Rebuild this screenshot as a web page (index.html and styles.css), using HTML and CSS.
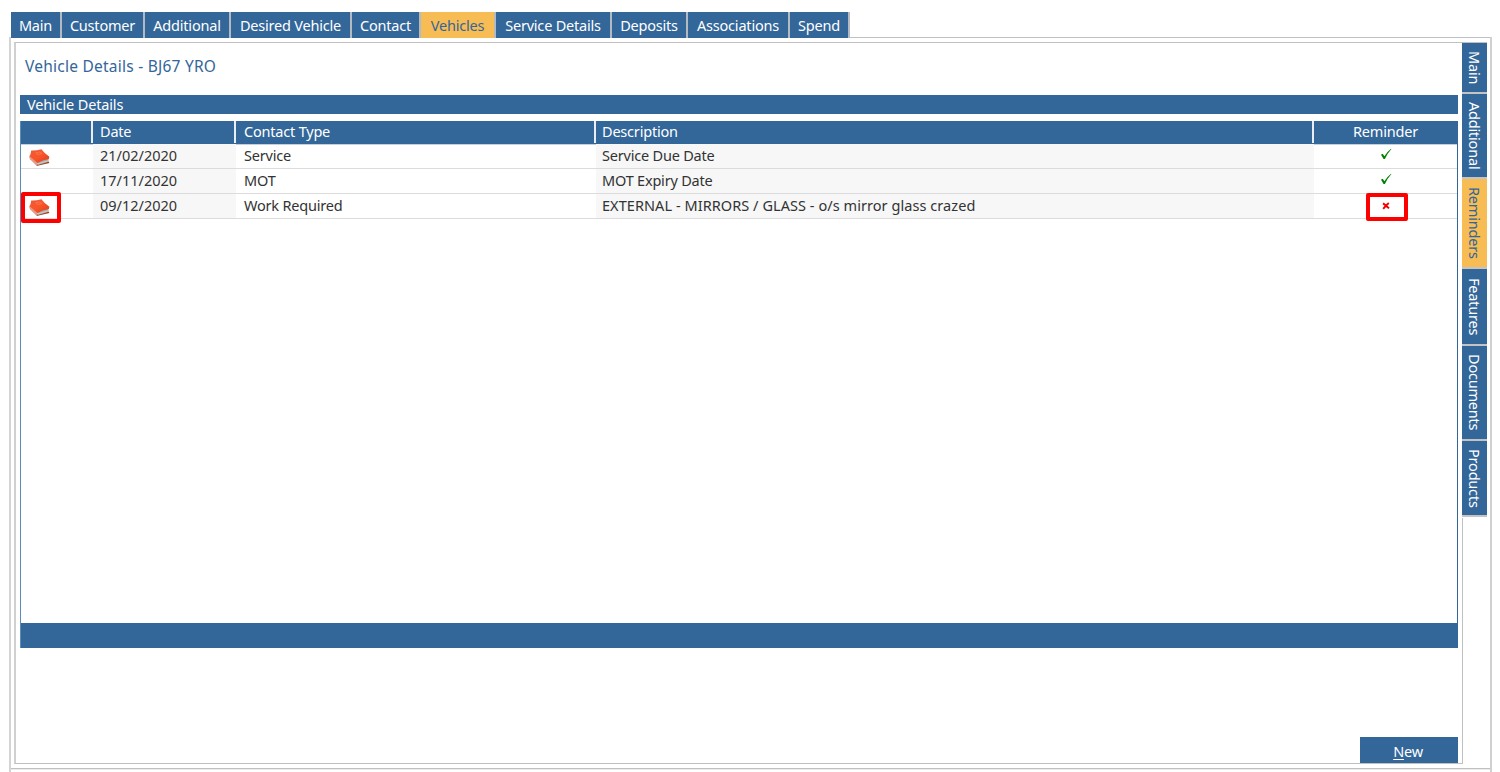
FILE: index.html
```html
<!DOCTYPE html>
<html lang="en">
<head>
<meta charset="UTF-8">
<title>Vehicle Details</title>
<link rel="stylesheet" href="styles.css">
</head>
<body>

<svg class="defs" aria-hidden="true">
  <defs>
    <linearGradient id="cover" x1="0" y1="0" x2="1" y2="1">
      <stop offset="0" stop-color="#ee5a38"/>
      <stop offset="0.5" stop-color="#fb5429"/>
      <stop offset="1" stop-color="#d8401c"/>
    </linearGradient>
  </defs>
  <symbol id="book" viewBox="0 0 22 20">
    <path d="M8.5 18 L21.4 14.9 L20.6 13.6 L9 16Z" fill="#a33a26"/>
    <path d="M9.2 13 L20.4 10 L20.6 13.8 L9.4 17.2Z" fill="#a9aba8"/>
    <path d="M9.6 15.8 L20.4 12.8" stroke="#d9dad8" stroke-width="0.7"/>
    <path d="M1.2 8 Q1.2 10 2 11.3 L8.8 17.9 L9.4 13.4Z" fill="#e39a88"/>
    <path d="M3.2 2.4 Q8.5 2.6 13.4 1.2 Q16.5 5.4 21.4 8.8 L20.8 11 Q14.5 12 9.6 14.9 L1.4 8.3 Q3 6 3.2 2.4Z" fill="url(#cover)"/>
    <path d="M7.8 4.8 L12 3.9 L13.8 5.5 L9.4 6.6Z" fill="none" stroke="#ff8560" stroke-width="0.6"/>
  </symbol>
  <symbol id="tick" viewBox="0 0 12 12">
    <path d="M1 6.8 L2.7 5.8 L4.4 8.2 Q7 4 11 0.8 L11.4 1.1 Q7.4 5.5 4.9 11 L3.6 11Z" fill="#008000"/>
  </symbol>
  <symbol id="cross" viewBox="0 0 8 8">
    <path d="M1 1.4 Q4 3.4 7 6.4 M6.8 1 Q3.8 3.4 1.2 6.8" fill="none" stroke="#f00000" stroke-width="1.9"/>
  </symbol>
</svg>

<nav class="tabs">
  <a>Main</a>
  <a>Customer</a>
  <a>Additional</a>
  <a>Desired Vehicle</a>
  <a>Contact</a>
  <a class="active">Vehicles</a>
  <a>Service Details</a>
  <a>Deposits</a>
  <a>Associations</a>
  <a>Spend</a>
</nav>

<div class="frame">
  <div class="panel">
    <h1>Vehicle Details - BJ67 YRO</h1>
    <h2>Vehicle Details</h2>

    <div class="grid">
      <div class="row head">
        <div></div>
        <div>Date</div>
        <div>Contact Type</div>
        <div>Description</div>
        <div>Reminder</div>
      </div>
      <div class="row">
        <div><svg class="book"><use href="#book"/></svg></div>
        <div class="date">21/02/2020</div>
        <div>Service</div>
        <div>Service Due Date</div>
        <div><svg class="tick"><use href="#tick"/></svg></div>
      </div>
      <div class="row">
        <div></div>
        <div class="date">17/11/2020</div>
        <div>MOT</div>
        <div>MOT Expiry Date</div>
        <div><svg class="tick"><use href="#tick"/></svg></div>
      </div>
      <div class="row">
        <div><svg class="book"><use href="#book"/></svg><span class="mark mark-book"></span></div>
        <div class="date">09/12/2020</div>
        <div>Work Required</div>
        <div><span class="long">EXTERNAL - MIRRORS / GLASS - o/s mirror glass crazed</span></div>
        <div><svg class="cross"><use href="#cross"/></svg><span class="mark mark-cross"></span></div>
      </div>
      <div class="grid-foot"></div>
    </div>

    <button class="new"><span><u>N</u>ew</span></button>
  </div>

  <nav class="side">
    <a>Main</a>
    <a>Additional</a>
    <a class="active">Reminders</a>
    <a>Features</a>
    <a>Documents</a>
    <a>Products</a>
    <div class="side-rest"></div>
  </nav>
</div>

</body>
</html>
```
FILE: styles.css
```css
* { box-sizing: border-box; }

body {
  margin: 0;
  height: 772px;
  padding: 12px 8px 0 9px;
  overflow: hidden;
  background: #fff;
  color: #333;
  font-family: "Noto Sans", sans-serif;
  font-size: 14.5px;
  letter-spacing: -0.2px;
  white-space: nowrap;
}

.defs {
  position: absolute;
  width: 0;
  height: 0;
}

/* top tabs */
.tabs {
  display: grid;
  grid-template-columns: 51px 83px 86px 121px 69px 75px 116px 76px 102px 60px;
  width: 839px;
  height: 26px;
  margin-left: 2px;
}

.tabs a {
  background: #336699;
  color: #fff;
  border-right: 2px solid #b4bac2;
  line-height: 27px;
  height: 26px;
  text-align: center;
}

.tabs .active {
  background: #f8bc55;
  color: #336699;
}

/* outer frame */
.frame {
  display: flex;
  height: 735px;
  padding: 4px 3px 0 3px;
  border-left: 2px solid #d4d4d4;
  border-right: 2px solid #d0d0d0;
  background:
    linear-gradient(#c0c0c0, #c0c0c0) 839px 0 / 100% 1px no-repeat,
    linear-gradient(#c0c0c0, #c0c0c0) 0 731px / 100% 1px no-repeat,
    linear-gradient(#ececec, #ececec) 0 732px / 100% 1px no-repeat;
  margin-top: -1px;
}

.panel {
  display: flex;
  flex-direction: column;
  width: 1448px;
  height: 722px;
  margin-top: 1px;
  padding: 0 4px;
  border: 1px solid #c0c0c0;
  border-left: 2px solid #d0d0d0;
  border-right: 0;
}

h1, h2 {
  margin: 0;
  font-size: inherit;
  font-weight: normal;
}

h1 {
  height: 52px;
  padding-left: 5px;
  font-size: 15.5px;
  letter-spacing: 0.24px;
  line-height: 47px;
  color: #336699;
}

h2 {
  height: 19px;
  margin-bottom: 7px;
  padding-left: 7px;
  background: #336699;
  color: #fff;
  letter-spacing: -0.15px;
  line-height: 19px;
}

/* reminders grid */
.grid {
  display: flex;
  flex-direction: column;
  height: 527px;
  border-left: 1px solid #5e8cba;
  border-right: 1px solid #336699;
}

.row {
  display: grid;
  grid-template-columns: 72px 143px 360px 718px 1fr;
  height: 25px;
  border-bottom: 1px solid #dcdcdc;
  line-height: 23px;
}

.row > div {
  position: relative;
  padding-left: 7px;
}

.row > div:nth-child(even) { background: #f7f7f7; }
.row > div:nth-child(3) { padding-left: 8px; }
.row > div:nth-child(4) { padding-left: 6px; }

.row > div:last-child {
  padding: 0;
  text-align: center;
}

.row.head {
  position: relative;
  height: 23px;
  background: #336699;
  color: #fff;
  border-bottom: 0;
  box-shadow: 0 1px #c3d1df;
  line-height: 20px;
}

.row.head > div:nth-child(n) { background: none; }

.row.head > div:not(:last-child) {
  border-right: 2px solid #e8eef4;
  height: 22px;
}

.date { letter-spacing: 0; }

.long { letter-spacing: 0.06px; }

.grid-foot {
  height: 25px;
  margin-top: auto;
  background: #336699;
}

.row svg { display: block; }

.row .book {
  width: 22px;
  height: 20px;
  margin-top: 4px;
}

.row .tick {
  width: 12px;
  height: 12px;
  margin: 4px auto 0;
}

.row .cross {
  width: 8px;
  height: 8px;
  margin: 8px auto 0;
}

/* red highlight boxes over the last row */
.mark {
  position: absolute;
  border: 4px solid #f00;
  border-radius: 2px;
}

.mark-book {
  z-index: 1;
  top: -2px;
  left: 0;
  width: 40px;
  height: 31px;
}

.mark-cross {
  top: -1px;
  left: 52px;
  width: 42px;
  height: 28px;
}

.new {
  width: 98px;
  height: 26px;
  margin: auto 0 0 auto;
  padding: 0 2px 0 0;
  border: 0;
  background: #336699;
  color: #fff;
  font: inherit;
  letter-spacing: inherit;
  line-height: 28px;
}

.new u { text-underline-offset: 2px; }

/* vertical tabs */
.side {
  display: grid;
  grid-template-rows: 51px 85px 90px 77px 95px 76px 1fr;
  width: 25px;
  height: 722px;
  margin-top: 1px;
  border-top: 1px solid #c0c0c0;
}

.side a {
  background: #336699;
  color: #fff;
  border-bottom: 2px solid #c4c4c4;
  writing-mode: vertical-rl;
  line-height: 25px;
  text-align: center;
}

.side .active {
  background: #f8bc55;
  color: #336699;
}

.side-rest {
  margin-top: 1px;
  border-left: 1px solid #c0c0c0;
}
```
